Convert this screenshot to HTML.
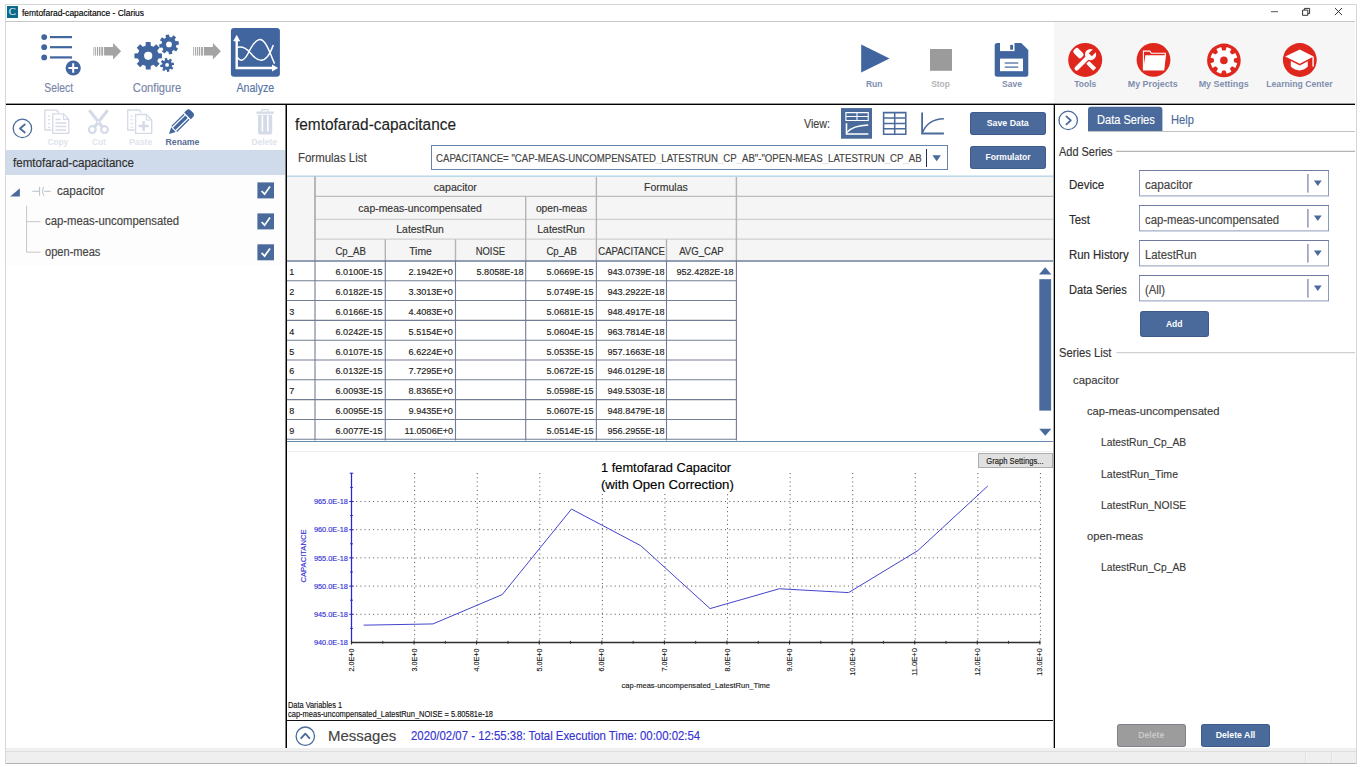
<!DOCTYPE html>
<html><head><meta charset="utf-8"><title>femtofarad-capacitance - Clarius</title>
<style>
html,body{margin:0;padding:0;background:#fff;}
body{width:1360px;height:767px;position:relative;overflow:hidden;font-family:"Liberation Sans",sans-serif;}
.t{position:absolute;white-space:nowrap;-webkit-text-stroke:0.15px;}
.r{position:absolute;display:block;}
</style></head><body>
<div class="r" style="left:5px;top:4px;width:1352px;height:760px;background:#ffffff;border:1px solid #d6d6d8;box-sizing:border-box;"></div>
<div class="r" style="left:7px;top:6px;width:11px;height:12px;background:#0b6a8c;"></div>
<div class="t" style="left:8.71px;top:4.90px;font-size:10.5px;line-height:14px;color:#d8e8ee;transform:scaleX(1.0000);transform-origin:50% 50%;font-family:'Liberation Serif',serif;">C</div>
<div class="t" style="left:22.00px;top:6.50px;font-size:9px;line-height:12px;color:#000;transform:scaleX(0.9380);transform-origin:0 50%;">femtofarad-capacitance - Clarius</div>
<div class="r" style="left:6px;top:21px;width:1349px;height:1px;background:#c6c6c6;"></div>
<svg class="r" style="left:1265px;top:3px;" width="90" height="16" viewBox="0 0 90 16"><path d="M6 8.7h7" stroke="#555" stroke-width="1" fill="none"/><path d="M37.6 7.1h5.2v5.2h-5.2z M39.4 7v-1.6h5.2v5.2h-1.7" stroke="#333" stroke-width="1" fill="none"/><path d="M69.9 5l7.1 7.1M77 5l-7.1 7.1" stroke="#333" stroke-width="1" fill="none"/></svg>
<div class="r" style="left:1054px;top:22px;width:301px;height:81px;background:#f6f6f6;"></div>
<div class="r" style="left:6px;top:103px;width:1349px;height:1px;background:#9a9a9a;"></div>
<div class="r" style="left:6px;top:104px;width:1349px;height:1px;background:#000;"></div>
<div class="r" style="left:285px;top:105px;width:1px;height:643px;background:#808080;"></div>
<div class="r" style="left:286px;top:105px;width:1px;height:643px;background:#000;"></div>
<div class="r" style="left:1053px;top:105px;width:1px;height:643px;background:#b0b0b0;"></div>
<div class="r" style="left:1054px;top:105px;width:1px;height:643px;background:#000;"></div>
<div class="r" style="left:287px;top:720px;width:766px;height:1px;background:#111;"></div>
<div class="r" style="left:6px;top:748px;width:1350px;height:3px;background:#f0f0f0;"></div>
<div class="r" style="left:6px;top:751px;width:1350px;height:1px;background:#dedede;"></div>
<div class="r" style="left:6px;top:752px;width:1350px;height:11px;background:#efefef;"></div>
<div class="r" style="left:6px;top:763px;width:1350px;height:1px;background:#b2b2b2;"></div>
<div class="r" style="left:1305px;top:752px;width:1px;height:11px;background:#e2e2e2;"></div>
<div class="r" style="left:1331px;top:752px;width:1px;height:11px;background:#e2e2e2;"></div>
<div class="r" style="left:1306px;top:752px;width:1px;height:11px;background:#f5f5f5;"></div>
<div class="r" style="left:1332px;top:752px;width:1px;height:11px;background:#f5f5f5;"></div>
<svg class="r" style="left:0px;top:0px;" width="300" height="100" viewBox="0 0 300 100"><circle cx="44.2" cy="37.1" r="2.9" fill="#40659f"/><rect x="50" y="36.0" width="22" height="2.2" fill="#40659f"/><circle cx="44.2" cy="47.2" r="2.9" fill="#40659f"/><rect x="50" y="46.1" width="22" height="2.2" fill="#40659f"/><circle cx="44.2" cy="57.4" r="2.9" fill="#40659f"/><rect x="50" y="56.3" width="22" height="2.2" fill="#40659f"/><circle cx="73.2" cy="68" r="7.6" fill="#40659f"/><path d="M68.4 68h9.6M73.2 63.2v9.6" stroke="#fff" stroke-width="2" fill="none"/><rect x="93.50" y="47" width="0.80" height="8.6" fill="#a3a3a3"/><rect x="95.20" y="47" width="0.90" height="8.6" fill="#a3a3a3"/><rect x="97.00" y="47" width="1.10" height="8.6" fill="#a3a3a3"/><rect x="99.00" y="47" width="1.40" height="8.6" fill="#a3a3a3"/><rect x="101.30" y="47" width="1.80" height="8.6" fill="#a3a3a3"/><path d="M104.10 47 H113.10 V43 L121.10 51.3 L113.10 59.4 V55.6 H104.10 Z" fill="#a3a3a3"/><path d="M158.37 53.19 L161.99 53.39 L161.99 58.21 L158.37 58.41 L157.24 61.14 L159.65 63.85 L156.25 67.25 L153.54 64.84 L150.81 65.97 L150.61 69.59 L145.79 69.59 L145.59 65.97 L142.86 64.84 L140.15 67.25 L136.75 63.85 L139.16 61.14 L138.03 58.41 L134.41 58.21 L134.41 53.39 L138.03 53.19 L139.16 50.46 L136.75 47.75 L140.15 44.35 L142.86 46.76 L145.59 45.63 L145.79 42.01 L150.61 42.01 L150.81 45.63 L153.54 46.76 L156.25 44.35 L159.65 47.75 L157.24 50.46Z M144.10 55.80 a4.10 4.10 0 1 0 8.20 0 a4.10 4.10 0 1 0 -8.20 0Z" fill="#40659f" fill-rule="evenodd"/><path d="M175.74 41.34 L178.40 41.00 L179.00 44.38 L176.38 44.97 L175.93 47.00 L178.06 48.64 L176.08 51.46 L173.82 50.02 L172.06 51.14 L172.40 53.80 L169.02 54.40 L168.43 51.78 L166.40 51.33 L164.76 53.46 L161.94 51.48 L163.38 49.22 L162.26 47.46 L159.60 47.80 L159.00 44.42 L161.62 43.83 L162.07 41.80 L159.94 40.16 L161.92 37.34 L164.18 38.78 L165.94 37.66 L165.60 35.00 L168.98 34.40 L169.57 37.02 L171.60 37.47 L173.24 35.34 L176.06 37.32 L174.62 39.58Z M166.10 44.40 a2.90 2.90 0 1 0 5.80 0 a2.90 2.90 0 1 0 -5.80 0Z" fill="#40659f" fill-rule="evenodd"/><path d="M171.65 62.83 L173.68 62.52 L174.10 64.89 L172.09 65.28 L171.78 66.66 L173.44 67.87 L172.06 69.84 L170.35 68.70 L169.17 69.45 L169.48 71.48 L167.11 71.90 L166.72 69.89 L165.34 69.58 L164.13 71.24 L162.16 69.86 L163.30 68.15 L162.55 66.97 L160.52 67.28 L160.10 64.91 L162.11 64.52 L162.42 63.14 L160.76 61.93 L162.14 59.96 L163.85 61.10 L165.03 60.35 L164.72 58.32 L167.09 57.90 L167.48 59.91 L168.86 60.22 L170.07 58.56 L172.04 59.94 L170.90 61.65Z M165.20 64.90 a1.90 1.90 0 1 0 3.80 0 a1.90 1.90 0 1 0 -3.80 0Z" fill="#40659f" fill-rule="evenodd"/><rect x="193.30" y="47" width="0.80" height="8.6" fill="#a3a3a3"/><rect x="195.00" y="47" width="0.90" height="8.6" fill="#a3a3a3"/><rect x="196.80" y="47" width="1.10" height="8.6" fill="#a3a3a3"/><rect x="198.80" y="47" width="1.40" height="8.6" fill="#a3a3a3"/><rect x="201.10" y="47" width="1.80" height="8.6" fill="#a3a3a3"/><path d="M203.90 47 H212.90 V43 L220.90 51.3 L212.90 59.4 V55.6 H203.90 Z" fill="#a3a3a3"/><rect x="230.9" y="28.1" width="49" height="48.7" rx="3.2" fill="#40659f"/><path d="M236.7 39.5V68H273" stroke="#fff" stroke-width="2.4" fill="none"/><path d="M233.2 41.2L236.7 34.8L240.2 41.2Z M272 64.6L278.2 68L272 71.4Z" fill="#fff"/><path d="M237.4 57.5C240 61.5 244 61.5 248 53.5C253 43 257 39.4 260.3 39.4C265 39.4 269 50 271 55C272.5 59 273.6 61.5 274.6 63.6" stroke="#fff" stroke-width="1.5" fill="none"/><path d="M237.4 47.3C243 46 247 49 250 52.5C254 57.5 257 60.3 261 60.3C266 60.3 270.5 53 273.3 45" stroke="#fff" stroke-width="1.5" fill="none"/></svg>
<div class="t" style="left:41.62px;top:79.50px;font-size:12px;line-height:16px;color:#7686aa;transform:scaleX(0.8605);transform-origin:50% 50%;">Select</div>
<div class="t" style="left:130.88px;top:79.50px;font-size:12px;line-height:16px;color:#7686aa;transform:scaleX(0.9302);transform-origin:50% 50%;">Configure</div>
<div class="t" style="left:233.85px;top:79.50px;font-size:12px;line-height:16px;color:#5875a6;transform:scaleX(0.8854);transform-origin:50% 50%;">Analyze</div>
<svg class="r" style="left:840px;top:30px;" width="520" height="60" viewBox="840 30 520 60"><path d="M861.2 44.6L889.6 58.6L861.2 72.6Z" fill="#40659f"/><rect x="930" y="49" width="22" height="21.8" fill="#9b9b9b"/><path d="M997.2 42.9H1021.2L1028.3 50V74.3a2.5 2.5 0 0 1 -2.5 2.5H997.2a2.5 2.5 0 0 1 -2.5 -2.5V45.4a2.5 2.5 0 0 1 2.5 -2.5Z" fill="#40659f"/><rect x="1000" y="42.5" width="14.5" height="8.6" fill="#fff"/><rect x="1010.2" y="44.9" width="2.8" height="4.8" fill="#40659f"/><rect x="1000" y="58.6" width="23" height="12.6" fill="#fff"/><rect x="1004.7" y="62.4" width="13.6" height="1.2" fill="#40659f"/><rect x="1004.7" y="66.5" width="13.6" height="1.2" fill="#40659f"/><circle cx="1085.2" cy="59.9" r="17" fill="#e0271d"/><g transform="translate(1085.2 59.9) rotate(-45)"><rect x="-14.2" y="-2.1" width="19" height="4.2" rx="2.1" fill="#fff"/><circle cx="7.6" cy="0" r="5.6" fill="#fff"/><rect x="7.2" y="-2.1" width="8" height="4.2" fill="#e0271d"/></g><g transform="translate(1085.2 59.9) rotate(45)"><rect x="-15" y="-3.3" width="10.8" height="6.6" rx="2.4" fill="#fff"/><rect x="3.4" y="-2.1" width="10" height="4.2" rx="0.8" fill="#fff"/></g><circle cx="1153.5" cy="59.9" r="16.9" fill="#e0271d"/><path d="M1143.4 69.5V51.1H1149.8L1151.3 53.2H1165.3V56" stroke="#fff" stroke-width="1.1" fill="none"/><path d="M1145.4 55.3H1166L1164.2 70.4H1143Z" fill="#fff"/><circle cx="1223.9" cy="60.4" r="16.8" fill="#e0271d"/><path d="M1233.88 61.98 L1237.32 63.18 L1235.35 67.92 L1232.07 66.34 L1229.84 68.57 L1231.42 71.85 L1226.68 73.82 L1225.48 70.38 L1222.32 70.38 L1221.12 73.82 L1216.38 71.85 L1217.96 68.57 L1215.73 66.34 L1212.45 67.92 L1210.48 63.18 L1213.92 61.98 L1213.92 58.82 L1210.48 57.62 L1212.45 52.88 L1215.73 54.46 L1217.96 52.23 L1216.38 48.95 L1221.12 46.98 L1222.32 50.42 L1225.48 50.42 L1226.68 46.98 L1231.42 48.95 L1229.84 52.23 L1232.07 54.46 L1235.35 52.88 L1237.32 57.62 L1233.88 58.82Z" fill="#fff"/><circle cx="1223.9" cy="60.4" r="3.8" fill="#e0271d"/><circle cx="1299.8" cy="60" r="16.9" fill="#e0271d"/><path d="M1299.8 49.6L1313.6 56.6L1299.8 63.8L1285.2 56.6Z" fill="#fff"/><path d="M1290.8 60.9L1299.8 65.4L1307.8 61.2V66.6C1306 69 1302.5 70.4 1299.5 70.4C1296.5 70.4 1292.6 69 1290.8 66.6Z" fill="#fff"/><rect x="1312.4" y="56.8" width="1.4" height="9.8" fill="#fff"/></svg>
<div class="t" style="left:864.97px;top:78.00px;font-size:9.5px;line-height:12px;color:#7f8eae;transform:scaleX(0.8989);transform-origin:50% 50%;font-weight:bold;-webkit-text-stroke:0;">Run</div>
<div class="t" style="left:930.25px;top:78.00px;font-size:9.5px;line-height:12px;color:#b5b5b5;transform:scaleX(0.8907);transform-origin:50% 50%;font-weight:bold;-webkit-text-stroke:0;">Stop</div>
<div class="t" style="left:1000.81px;top:78.00px;font-size:9.5px;line-height:12px;color:#7f8eae;transform:scaleX(0.9014);transform-origin:50% 50%;font-weight:bold;-webkit-text-stroke:0;">Save</div>
<div class="t" style="left:1072.89px;top:78.00px;font-size:9.5px;line-height:12px;color:#7f8eae;transform:scaleX(0.8933);transform-origin:50% 50%;font-weight:bold;-webkit-text-stroke:0;">Tools</div>
<div class="t" style="left:1126.44px;top:78.00px;font-size:9.5px;line-height:12px;color:#7f8eae;transform:scaleX(0.9338);transform-origin:50% 50%;font-weight:bold;-webkit-text-stroke:0;">My Projects</div>
<div class="t" style="left:1197.14px;top:78.00px;font-size:9.5px;line-height:12px;color:#7f8eae;transform:scaleX(0.9378);transform-origin:50% 50%;font-weight:bold;-webkit-text-stroke:0;">My Settings</div>
<div class="t" style="left:1263.08px;top:78.00px;font-size:9.5px;line-height:12px;color:#7f8eae;transform:scaleX(0.9101);transform-origin:50% 50%;font-weight:bold;-webkit-text-stroke:0;">Learning Center</div>
<svg class="r" style="left:6px;top:105px;" width="279" height="45" viewBox="6 105 279 45"><circle cx="22.4" cy="128.4" r="9.2" fill="none" stroke="#4a6a9b" stroke-width="1.3"/><path d="M24.8 124.5L20 128.5L24.8 132.5" fill="none" stroke="#4a6a9b" stroke-width="1.8" stroke-linecap="round" stroke-linejoin="round"/><path d="M51.5 130H44.8V110.2H56.5L59 112.8" fill="none" stroke="#d4dae7" stroke-width="1.3"/><rect x="47.8" y="115.5" width="2.2" height="1.1" fill="#d4dae7"/><rect x="47.8" y="119.2" width="2.2" height="1.1" fill="#d4dae7"/><rect x="47.8" y="123.0" width="2.2" height="1.1" fill="#d4dae7"/><rect x="47.8" y="126.8" width="2.2" height="1.1" fill="#d4dae7"/><path d="M52.8 113.9H63.5L68.8 119.4V133.4H52.8Z" fill="#fff" stroke="#d4dae7" stroke-width="1.3"/><path d="M63.5 113.9V119.4H68.8" fill="none" stroke="#d4dae7" stroke-width="1.1"/><path d="M55.5 119.5h5M55.5 123h10.6M55.5 126.5h10.6M55.5 130h10.6" stroke="#d4dae7" stroke-width="1.3" fill="none"/><path d="M89.3 110.2L102.6 127.4M107.6 110.2L94.3 127.4" stroke="#d4dae7" stroke-width="3.1" fill="none"/><circle cx="98.45" cy="122.2" r="0.9" fill="#fff"/><circle cx="92.3" cy="129.6" r="3.4" fill="none" stroke="#d4dae7" stroke-width="2.2"/><circle cx="104.5" cy="129.6" r="3.4" fill="none" stroke="#d4dae7" stroke-width="2.2"/><path d="M134.6 130H127.7V110H139L141.5 112.6" fill="none" stroke="#d4dae7" stroke-width="1.3"/><rect x="130.6" y="115.5" width="2.2" height="1.1" fill="#d4dae7"/><rect x="130.6" y="119.2" width="2.2" height="1.1" fill="#d4dae7"/><rect x="130.6" y="123.0" width="2.2" height="1.1" fill="#d4dae7"/><rect x="130.6" y="126.8" width="2.2" height="1.1" fill="#d4dae7"/><path d="M135.6 114.5H146.3L151.7 120V133.4H135.6Z" fill="#fff" stroke="#d4dae7" stroke-width="1.3"/><path d="M146.3 114.5V120H151.7" fill="none" stroke="#d4dae7" stroke-width="1.1"/><path d="M138.6 126h10M143.6 121v10" stroke="#d4dae7" stroke-width="2.4" fill="none"/><g transform="translate(169 134) rotate(-44.5)" fill="#40659f"><path d="M0 0L6.2 -3.2V3.2Z"/><path d="M7.3 -4.2H24.6V-2.9H7.3Z M7.3 -1.6H24.6V1.6H7.3Z M7.3 2.9H24.6V4.2H7.3Z"/><path d="M26 -4.7H29.1a2.9 2.9 0 0 1 2.9 2.9V1.8a2.9 2.9 0 0 1 -2.9 2.9H26Z"/></g><path d="M261.5 111.6V110.6a1 1 0 0 1 1 -1H267.6a1 1 0 0 1 1 1V111.6" fill="none" stroke="#d4dae7" stroke-width="1.2"/><rect x="256.4" y="111.5" width="17.4" height="2.3" fill="#d4dae7"/><path d="M258 114.7H272.2V132.4a2 2 0 0 1 -2 2H260a2 2 0 0 1 -2 -2Z" fill="#d4dae7"/><rect x="261.6" y="115.5" width="1.6" height="16" fill="#fff"/><rect x="267" y="115.5" width="1.6" height="16" fill="#fff"/></svg>
<div class="t" style="left:45.82px;top:136.00px;font-size:9.5px;line-height:12px;color:#e0e4ec;transform:scaleX(0.8673);transform-origin:50% 50%;font-weight:bold;-webkit-text-stroke:0;">Copy</div>
<div class="t" style="left:90.79px;top:136.00px;font-size:9.5px;line-height:12px;color:#e0e4ec;transform:scaleX(0.8719);transform-origin:50% 50%;font-weight:bold;-webkit-text-stroke:0;">Cut</div>
<div class="t" style="left:127.92px;top:136.00px;font-size:9.5px;line-height:12px;color:#e0e4ec;transform:scaleX(0.9309);transform-origin:50% 50%;font-weight:bold;-webkit-text-stroke:0;">Paste</div>
<div class="t" style="left:163.52px;top:136.00px;font-size:9.5px;line-height:12px;color:#586d97;transform:scaleX(0.9199);transform-origin:50% 50%;font-weight:bold;-webkit-text-stroke:0;">Rename</div>
<div class="t" style="left:250.34px;top:136.00px;font-size:9.5px;line-height:12px;color:#e0e4ec;transform:scaleX(0.8978);transform-origin:50% 50%;font-weight:bold;-webkit-text-stroke:0;">Delete</div>
<div class="r" style="left:6px;top:150px;width:279px;height:25px;background:#cfdaea;"></div>
<div class="t" style="left:12.80px;top:154.60px;font-size:12px;line-height:16px;color:#2e2e2e;transform:scaleX(0.9649);transform-origin:0 50%;">femtofarad-capacitance</div>
<div class="r" style="left:6px;top:175px;width:279px;height:91px;background:#fdfdfd;"></div>
<svg class="r" style="left:6px;top:178px;" width="279" height="90" viewBox="6 178 279 90"><path d="M10.2 196.4H19.9V188.2Z" fill="#4a6a9b"/><path d="M32.4 191.3H39.2M39.6 186.9V195.7M50.5 191.3H44.2" stroke="#b0b5c2" stroke-width="0.9" fill="none"/><path d="M43.8 186.9C42.2 189 42.2 193.6 43.8 195.7" stroke="#b0b5c2" stroke-width="0.9" fill="none"/><path d="M26.6 205.8V252.2M26.6 221.7H40.5M26.6 252.2H40.5" stroke="#c6c6c6" stroke-width="1" fill="none"/><rect x="257.4" y="182.4" width="16.6" height="16" fill="#4a6a9b"/><path d="M261.6 191.0L264.6 194.2L270.0 186.6" stroke="#fff" stroke-width="1.7" fill="none"/><rect x="257.4" y="213.4" width="16.6" height="16" fill="#4a6a9b"/><path d="M261.6 222.0L264.6 225.2L270.0 217.6" stroke="#fff" stroke-width="1.7" fill="none"/><rect x="257.4" y="244.3" width="16.6" height="16" fill="#4a6a9b"/><path d="M261.6 252.9L264.6 256.1L270.0 248.5" stroke="#fff" stroke-width="1.7" fill="none"/></svg>
<div class="t" style="left:57.00px;top:182.60px;font-size:12px;line-height:16px;color:#444444;transform:scaleX(0.9755);transform-origin:0 50%;">capacitor</div>
<div class="t" style="left:45.20px;top:213.40px;font-size:12px;line-height:16px;color:#444444;transform:scaleX(0.9431);transform-origin:0 50%;">cap-meas-uncompensated</div>
<div class="t" style="left:45.20px;top:244.40px;font-size:12px;line-height:16px;color:#444444;transform:scaleX(0.9228);transform-origin:0 50%;">open-meas</div>
<div class="t" style="left:294.50px;top:114.10px;font-size:16px;line-height:21px;color:#1f1f1f;transform:scaleX(0.9629);transform-origin:0 50%;">femtofarad-capacitance</div>
<div class="t" style="left:297.50px;top:150.20px;font-size:12px;line-height:16px;color:#444;transform:scaleX(0.9525);transform-origin:0 50%;">Formulas List</div>
<div class="t" style="left:804.40px;top:115.60px;font-size:12px;line-height:16px;color:#444;transform:scaleX(0.8926);transform-origin:0 50%;">View:</div>
<svg class="r" style="left:836px;top:106px;" width="112" height="34" viewBox="836 106 112 34"><rect x="841" y="108.1" width="31" height="30.6" fill="#4a6a9b"/><path d="M845.9 112.6H868.2V120.5H845.9ZM845.9 116.5H868.2M857 112.6V120.5" stroke="#fff" stroke-width="1.1" fill="none"/><path d="M846.5 123.2V134H868.4" stroke="#fff" stroke-width="1.6" fill="none"/><path d="M847 132.4C851 127.6 857 125.4 868.2 125" stroke="#fff" stroke-width="1.3" fill="none"/><path d="M883.6 112.6H905.8V134.2H883.6ZM883.6 118H905.8M883.6 123.4H905.8M883.6 128.8H905.8M894.7 112.6V134.2" stroke="#4a6a9b" stroke-width="1.55" fill="none"/><path d="M922.1 112.4V133.5H943.9" stroke="#4a6a9b" stroke-width="1.8" fill="none"/><path d="M922.8 132.2C926 124 932 119.2 943.9 118.8" stroke="#4a6a9b" stroke-width="1.5" fill="none"/></svg>
<div class="r" style="left:969.8px;top:111.8px;width:76px;height:23px;background:#4a6a9b;border-radius:3px;box-shadow:inset 0 0 0 1px rgba(20,40,90,0.22);"></div>
<div class="t" style="left:985.09px;top:117.00px;font-size:9.5px;line-height:12px;color:#fff;transform:scaleX(0.9247);transform-origin:50% 50%;font-weight:bold;-webkit-text-stroke:0;">Save Data</div>
<div class="r" style="left:969.8px;top:145.7px;width:76px;height:23px;background:#4a6a9b;border-radius:3px;box-shadow:inset 0 0 0 1px rgba(20,40,90,0.22);"></div>
<div class="t" style="left:982.73px;top:150.90px;font-size:9.5px;line-height:12px;color:#fff;transform:scaleX(0.8975);transform-origin:50% 50%;font-weight:bold;-webkit-text-stroke:0;">Formulator</div>
<div class="r" style="left:431px;top:145px;width:517px;height:25px;background:#fff;border:1px solid #6483ad;box-sizing:border-box;"></div>
<div class="r" style="left:926px;top:149.3px;width:1px;height:17.8px;background:#22304d;"></div>
<svg class="r" style="left:930px;top:153px;" width="14" height="10" viewBox="0 0 14 10"><path d="M2.4 2.2H10.9L6.65 8.3Z" fill="#4a6a9b"/></svg>
<div class="t" style="left:436.30px;top:151.70px;font-size:10px;line-height:13px;color:#444;transform:scaleX(0.9633);transform-origin:0 50%;">CAPACITANCE= &quot;CAP-MEAS-UNCOMPENSATED<span style="color:#e2e2e2">_</span>LATESTRUN<span style="color:#e2e2e2">_</span>CP<span style="color:#e2e2e2">_</span>AB&quot;-&quot;OPEN-MEAS<span style="color:#e2e2e2">_</span>LATESTRUN<span style="color:#e2e2e2">_</span>CP<span style="color:#e2e2e2">_</span>AB</div>
<div class="r" style="left:287px;top:176px;width:766px;height:85px;background:#f5f5f5;"></div>
<div class="r" style="left:287px;top:175px;width:766px;height:1px;background:#d9eaf3;"></div>
<div class="r" style="left:287px;top:176px;width:766px;height:1px;background:#bcd9e8;"></div>
<svg class="r" style="left:287px;top:174px;" width="766" height="268" viewBox="287 174 766 268"><path d="M315 196.4H1053" stroke="#bdbdbd" stroke-width="1.3"/><path d="M315 219.3H1053" stroke="#cfcfcf" stroke-width="1.3"/><path d="M315 239.2H1053" stroke="#cfcfcf" stroke-width="1.3"/><path d="M315 176.5V261" stroke="#9c9ca4" stroke-width="1.4"/><path d="M596.4 177V261M736.4 177V261" stroke="#b4b4b4" stroke-width="1.4"/><path d="M525.7 196.4V261" stroke="#b4b4b4" stroke-width="1.4"/><path d="M385.3 239.2V261M455.5 239.2V261M666.5 239.2V261" stroke="#b4b4b4" stroke-width="1.4"/><rect x="287" y="261.5" width="449.4" height="179" fill="#fff"/><path d="M287 280.72H736.4" stroke="#737c94" stroke-width="1.1"/><path d="M287 300.54H736.4" stroke="#737c94" stroke-width="1.1"/><path d="M287 320.36H736.4" stroke="#737c94" stroke-width="1.1"/><path d="M287 340.18H736.4" stroke="#737c94" stroke-width="1.1"/><path d="M287 360.00H736.4" stroke="#737c94" stroke-width="1.1"/><path d="M287 379.82H736.4" stroke="#737c94" stroke-width="1.1"/><path d="M287 399.64H736.4" stroke="#737c94" stroke-width="1.1"/><path d="M287 419.46H736.4" stroke="#737c94" stroke-width="1.1"/><path d="M287 439.28H736.4" stroke="#737c94" stroke-width="1.1"/><path d="M315.0 261V440.5" stroke="#737c94" stroke-width="1.1"/><path d="M385.3 261V440.5" stroke="#737c94" stroke-width="1.1"/><path d="M455.5 261V440.5" stroke="#737c94" stroke-width="1.1"/><path d="M525.7 261V440.5" stroke="#737c94" stroke-width="1.1"/><path d="M596.4 261V440.5" stroke="#737c94" stroke-width="1.1"/><path d="M666.5 261V440.5" stroke="#737c94" stroke-width="1.1"/><path d="M736.4 261V440.5" stroke="#737c94" stroke-width="1.1"/><path d="M287 260.9H1053" stroke="#6f7f9c" stroke-width="1.5"/></svg>
<div class="t" style="left:433.38px;top:179.80px;font-size:11px;line-height:14px;color:#333;transform:scaleX(0.9678);transform-origin:50% 50%;">capacitor</div>
<div class="t" style="left:643.48px;top:179.80px;font-size:11px;line-height:14px;color:#333;transform:scaleX(0.9510);transform-origin:50% 50%;">Formulas</div>
<div class="t" style="left:355.28px;top:201.30px;font-size:11px;line-height:14px;color:#333;transform:scaleX(0.9482);transform-origin:50% 50%;">cap-meas-uncompensated</div>
<div class="t" style="left:533.68px;top:201.30px;font-size:11px;line-height:14px;color:#333;transform:scaleX(0.9303);transform-origin:50% 50%;">open-meas</div>
<div class="t" style="left:395.33px;top:222.30px;font-size:11px;line-height:14px;color:#333;transform:scaleX(0.9472);transform-origin:50% 50%;">LatestRun</div>
<div class="t" style="left:536.13px;top:222.30px;font-size:11px;line-height:14px;color:#333;transform:scaleX(0.9472);transform-origin:50% 50%;">LatestRun</div>
<div class="t" style="left:333.56px;top:243.90px;font-size:10.5px;line-height:14px;color:#333;transform:scaleX(0.9137);transform-origin:50% 50%;">Cp_AB</div>
<div class="t" style="left:409.03px;top:243.90px;font-size:10.5px;line-height:14px;color:#333;transform:scaleX(0.9850);transform-origin:50% 50%;">Time</div>
<div class="t" style="left:474.26px;top:243.90px;font-size:10.5px;line-height:14px;color:#333;transform:scaleX(0.8998);transform-origin:50% 50%;">NOISE</div>
<div class="t" style="left:544.56px;top:243.90px;font-size:10.5px;line-height:14px;color:#333;transform:scaleX(0.9137);transform-origin:50% 50%;">Cp_AB</div>
<div class="t" style="left:594.94px;top:243.90px;font-size:10.5px;line-height:14px;color:#333;transform:scaleX(0.9108);transform-origin:50% 50%;">CAPACITANCE</div>
<div class="t" style="left:677.09px;top:243.90px;font-size:10.5px;line-height:14px;color:#333;transform:scaleX(0.9114);transform-origin:50% 50%;">AVG_CAP</div>
<div class="t" style="left:289.30px;top:266.30px;font-size:9px;line-height:12px;color:#1e1e1e;transform:scaleX(1.0000);transform-origin:0 50%;">1</div>
<div class="t" style="left:336.36px;top:266.30px;font-size:9px;line-height:12px;color:#1e1e1e;transform:scaleX(1.0100);transform-origin:100% 50%;">6.0100E-15</div>
<div class="t" style="left:409.31px;top:266.30px;font-size:9px;line-height:12px;color:#1e1e1e;transform:scaleX(1.0100);transform-origin:100% 50%;">2.1942E+0</div>
<div class="t" style="left:476.76px;top:266.30px;font-size:9px;line-height:12px;color:#1e1e1e;transform:scaleX(1.0100);transform-origin:100% 50%;">5.8058E-18</div>
<div class="t" style="left:547.46px;top:266.30px;font-size:9px;line-height:12px;color:#1e1e1e;transform:scaleX(1.0100);transform-origin:100% 50%;">5.0669E-15</div>
<div class="t" style="left:607.55px;top:266.30px;font-size:9px;line-height:12px;color:#1e1e1e;transform:scaleX(1.0100);transform-origin:100% 50%;">943.0739E-18</div>
<div class="t" style="left:677.45px;top:266.30px;font-size:9px;line-height:12px;color:#1e1e1e;transform:scaleX(1.0100);transform-origin:100% 50%;">952.4282E-18</div>
<div class="t" style="left:289.30px;top:286.12px;font-size:9px;line-height:12px;color:#1e1e1e;transform:scaleX(1.0000);transform-origin:0 50%;">2</div>
<div class="t" style="left:336.36px;top:286.12px;font-size:9px;line-height:12px;color:#1e1e1e;transform:scaleX(1.0100);transform-origin:100% 50%;">6.0182E-15</div>
<div class="t" style="left:409.31px;top:286.12px;font-size:9px;line-height:12px;color:#1e1e1e;transform:scaleX(1.0100);transform-origin:100% 50%;">3.3013E+0</div>
<div class="t" style="left:547.46px;top:286.12px;font-size:9px;line-height:12px;color:#1e1e1e;transform:scaleX(1.0100);transform-origin:100% 50%;">5.0749E-15</div>
<div class="t" style="left:607.55px;top:286.12px;font-size:9px;line-height:12px;color:#1e1e1e;transform:scaleX(1.0100);transform-origin:100% 50%;">943.2922E-18</div>
<div class="t" style="left:289.30px;top:305.94px;font-size:9px;line-height:12px;color:#1e1e1e;transform:scaleX(1.0000);transform-origin:0 50%;">3</div>
<div class="t" style="left:336.36px;top:305.94px;font-size:9px;line-height:12px;color:#1e1e1e;transform:scaleX(1.0100);transform-origin:100% 50%;">6.0166E-15</div>
<div class="t" style="left:409.31px;top:305.94px;font-size:9px;line-height:12px;color:#1e1e1e;transform:scaleX(1.0100);transform-origin:100% 50%;">4.4083E+0</div>
<div class="t" style="left:547.46px;top:305.94px;font-size:9px;line-height:12px;color:#1e1e1e;transform:scaleX(1.0100);transform-origin:100% 50%;">5.0681E-15</div>
<div class="t" style="left:607.55px;top:305.94px;font-size:9px;line-height:12px;color:#1e1e1e;transform:scaleX(1.0100);transform-origin:100% 50%;">948.4917E-18</div>
<div class="t" style="left:289.30px;top:325.76px;font-size:9px;line-height:12px;color:#1e1e1e;transform:scaleX(1.0000);transform-origin:0 50%;">4</div>
<div class="t" style="left:336.36px;top:325.76px;font-size:9px;line-height:12px;color:#1e1e1e;transform:scaleX(1.0100);transform-origin:100% 50%;">6.0242E-15</div>
<div class="t" style="left:409.31px;top:325.76px;font-size:9px;line-height:12px;color:#1e1e1e;transform:scaleX(1.0100);transform-origin:100% 50%;">5.5154E+0</div>
<div class="t" style="left:547.46px;top:325.76px;font-size:9px;line-height:12px;color:#1e1e1e;transform:scaleX(1.0100);transform-origin:100% 50%;">5.0604E-15</div>
<div class="t" style="left:607.55px;top:325.76px;font-size:9px;line-height:12px;color:#1e1e1e;transform:scaleX(1.0100);transform-origin:100% 50%;">963.7814E-18</div>
<div class="t" style="left:289.30px;top:345.58px;font-size:9px;line-height:12px;color:#1e1e1e;transform:scaleX(1.0000);transform-origin:0 50%;">5</div>
<div class="t" style="left:336.36px;top:345.58px;font-size:9px;line-height:12px;color:#1e1e1e;transform:scaleX(1.0100);transform-origin:100% 50%;">6.0107E-15</div>
<div class="t" style="left:409.31px;top:345.58px;font-size:9px;line-height:12px;color:#1e1e1e;transform:scaleX(1.0100);transform-origin:100% 50%;">6.6224E+0</div>
<div class="t" style="left:547.46px;top:345.58px;font-size:9px;line-height:12px;color:#1e1e1e;transform:scaleX(1.0100);transform-origin:100% 50%;">5.0535E-15</div>
<div class="t" style="left:607.55px;top:345.58px;font-size:9px;line-height:12px;color:#1e1e1e;transform:scaleX(1.0100);transform-origin:100% 50%;">957.1663E-18</div>
<div class="t" style="left:289.30px;top:365.40px;font-size:9px;line-height:12px;color:#1e1e1e;transform:scaleX(1.0000);transform-origin:0 50%;">6</div>
<div class="t" style="left:336.36px;top:365.40px;font-size:9px;line-height:12px;color:#1e1e1e;transform:scaleX(1.0100);transform-origin:100% 50%;">6.0132E-15</div>
<div class="t" style="left:409.31px;top:365.40px;font-size:9px;line-height:12px;color:#1e1e1e;transform:scaleX(1.0100);transform-origin:100% 50%;">7.7295E+0</div>
<div class="t" style="left:547.46px;top:365.40px;font-size:9px;line-height:12px;color:#1e1e1e;transform:scaleX(1.0100);transform-origin:100% 50%;">5.0672E-15</div>
<div class="t" style="left:607.55px;top:365.40px;font-size:9px;line-height:12px;color:#1e1e1e;transform:scaleX(1.0100);transform-origin:100% 50%;">946.0129E-18</div>
<div class="t" style="left:289.30px;top:385.22px;font-size:9px;line-height:12px;color:#1e1e1e;transform:scaleX(1.0000);transform-origin:0 50%;">7</div>
<div class="t" style="left:336.36px;top:385.22px;font-size:9px;line-height:12px;color:#1e1e1e;transform:scaleX(1.0100);transform-origin:100% 50%;">6.0093E-15</div>
<div class="t" style="left:409.31px;top:385.22px;font-size:9px;line-height:12px;color:#1e1e1e;transform:scaleX(1.0100);transform-origin:100% 50%;">8.8365E+0</div>
<div class="t" style="left:547.46px;top:385.22px;font-size:9px;line-height:12px;color:#1e1e1e;transform:scaleX(1.0100);transform-origin:100% 50%;">5.0598E-15</div>
<div class="t" style="left:607.55px;top:385.22px;font-size:9px;line-height:12px;color:#1e1e1e;transform:scaleX(1.0100);transform-origin:100% 50%;">949.5303E-18</div>
<div class="t" style="left:289.30px;top:405.04px;font-size:9px;line-height:12px;color:#1e1e1e;transform:scaleX(1.0000);transform-origin:0 50%;">8</div>
<div class="t" style="left:336.36px;top:405.04px;font-size:9px;line-height:12px;color:#1e1e1e;transform:scaleX(1.0100);transform-origin:100% 50%;">6.0095E-15</div>
<div class="t" style="left:409.31px;top:405.04px;font-size:9px;line-height:12px;color:#1e1e1e;transform:scaleX(1.0100);transform-origin:100% 50%;">9.9435E+0</div>
<div class="t" style="left:547.46px;top:405.04px;font-size:9px;line-height:12px;color:#1e1e1e;transform:scaleX(1.0100);transform-origin:100% 50%;">5.0607E-15</div>
<div class="t" style="left:607.55px;top:405.04px;font-size:9px;line-height:12px;color:#1e1e1e;transform:scaleX(1.0100);transform-origin:100% 50%;">948.8479E-18</div>
<div class="t" style="left:289.30px;top:424.86px;font-size:9px;line-height:12px;color:#1e1e1e;transform:scaleX(1.0000);transform-origin:0 50%;">9</div>
<div class="t" style="left:336.36px;top:424.86px;font-size:9px;line-height:12px;color:#1e1e1e;transform:scaleX(1.0100);transform-origin:100% 50%;">6.0077E-15</div>
<div class="t" style="left:404.97px;top:424.86px;font-size:9px;line-height:12px;color:#1e1e1e;transform:scaleX(1.0100);transform-origin:100% 50%;">11.0506E+0</div>
<div class="t" style="left:547.46px;top:424.86px;font-size:9px;line-height:12px;color:#1e1e1e;transform:scaleX(1.0100);transform-origin:100% 50%;">5.0514E-15</div>
<div class="t" style="left:607.55px;top:424.86px;font-size:9px;line-height:12px;color:#1e1e1e;transform:scaleX(1.0100);transform-origin:100% 50%;">956.2955E-18</div>
<svg class="r" style="left:1036px;top:265px;" width="18" height="174" viewBox="1036 265 18 174"><path d="M1039 274.4L1045.2 267.3L1051.4 274.4Z" fill="#4a6a9b"/><rect x="1039.3" y="279.2" width="11.8" height="131.4" fill="#4a6a9b"/><path d="M1039.2 428.8H1051.4L1045.3 435.7Z" fill="#4a6a9b"/></svg>
<div class="r" style="left:287px;top:441px;width:766px;height:1px;background:#6a8bb0;"></div>
<div class="r" style="left:287px;top:451px;width:766px;height:1px;background:#ededed;"></div>
<svg class="r" style="left:287px;top:452px;" width="766" height="200" viewBox="287 452 766 200"><path d="M356.10 614.30H1040.48" stroke="#505050" stroke-width="1" stroke-dasharray="1.05 3.19" stroke-opacity="0.95"/><path d="M356.10 586.10H1040.48" stroke="#505050" stroke-width="1" stroke-dasharray="1.05 3.19" stroke-opacity="0.95"/><path d="M356.10 557.90H1040.48" stroke="#505050" stroke-width="1" stroke-dasharray="1.05 3.19" stroke-opacity="0.95"/><path d="M356.10 529.70H1040.48" stroke="#505050" stroke-width="1" stroke-dasharray="1.05 3.19" stroke-opacity="0.95"/><path d="M356.10 501.50H1040.48" stroke="#505050" stroke-width="1" stroke-dasharray="1.05 3.19" stroke-opacity="0.95"/><path d="M414.63 473.00V640.50" stroke="#505050" stroke-width="1" stroke-dasharray="1.05 3.19" stroke-opacity="0.95"/><path d="M477.21 473.00V640.50" stroke="#505050" stroke-width="1" stroke-dasharray="1.05 3.19" stroke-opacity="0.95"/><path d="M539.79 473.00V640.50" stroke="#505050" stroke-width="1" stroke-dasharray="1.05 3.19" stroke-opacity="0.95"/><path d="M602.37 494.00V640.50" stroke="#505050" stroke-width="1" stroke-dasharray="1.05 3.19" stroke-opacity="0.95"/><path d="M664.95 494.00V640.50" stroke="#505050" stroke-width="1" stroke-dasharray="1.05 3.19" stroke-opacity="0.95"/><path d="M727.53 473.00V640.50" stroke="#505050" stroke-width="1" stroke-dasharray="1.05 3.19" stroke-opacity="0.95"/><path d="M790.11 473.00V640.50" stroke="#505050" stroke-width="1" stroke-dasharray="1.05 3.19" stroke-opacity="0.95"/><path d="M852.69 473.00V640.50" stroke="#505050" stroke-width="1" stroke-dasharray="1.05 3.19" stroke-opacity="0.95"/><path d="M915.27 473.00V640.50" stroke="#505050" stroke-width="1" stroke-dasharray="1.05 3.19" stroke-opacity="0.95"/><path d="M977.85 473.00V640.50" stroke="#505050" stroke-width="1" stroke-dasharray="1.05 3.19" stroke-opacity="0.95"/><path d="M1040.43 473.00V640.50" stroke="#505050" stroke-width="1" stroke-dasharray="1.05 3.19" stroke-opacity="0.95"/><polyline points="363.65,625.16 432.94,623.93 502.21,594.61 571.49,509.06 640.77,545.68 710.05,608.59 779.33,588.75 848.60,592.60 917.89,550.59 987.81,485.99" fill="none" stroke="#4444cf" stroke-width="1" stroke-linejoin="round"/><path d="M351.50 473V642.50" stroke="#2828cc" stroke-width="1.25"/><path d="M349.70 473.2H353.30" stroke="#2828cc" stroke-width="1"/><path d="M350.00 628.40H353.00" stroke="#2828cc" stroke-width="0.9"/><path d="M349.30 614.30H353.70" stroke="#2828cc" stroke-width="1.1"/><path d="M350.00 600.20H353.00" stroke="#2828cc" stroke-width="0.9"/><path d="M349.30 586.10H353.70" stroke="#2828cc" stroke-width="1.1"/><path d="M350.00 572.00H353.00" stroke="#2828cc" stroke-width="0.9"/><path d="M349.30 557.90H353.70" stroke="#2828cc" stroke-width="1.1"/><path d="M350.00 543.80H353.00" stroke="#2828cc" stroke-width="0.9"/><path d="M349.30 529.70H353.70" stroke="#2828cc" stroke-width="1.1"/><path d="M350.00 515.60H353.00" stroke="#2828cc" stroke-width="0.9"/><path d="M349.30 501.50H353.70" stroke="#2828cc" stroke-width="1.1"/><path d="M350.00 487.40H353.00" stroke="#2828cc" stroke-width="0.9"/><path d="M350.90 642.50H1040.38" stroke="#2e2e2e" stroke-width="1.3"/><path d="M351.50 640.50V644.50" stroke="#2e2e2e" stroke-width="1.1"/><path d="M382.79 640.90V643.70" stroke="#2e2e2e" stroke-width="1"/><path d="M414.08 640.50V644.50" stroke="#2e2e2e" stroke-width="1.1"/><path d="M445.37 640.90V643.70" stroke="#2e2e2e" stroke-width="1"/><path d="M476.66 640.50V644.50" stroke="#2e2e2e" stroke-width="1.1"/><path d="M507.95 640.90V643.70" stroke="#2e2e2e" stroke-width="1"/><path d="M539.24 640.50V644.50" stroke="#2e2e2e" stroke-width="1.1"/><path d="M570.53 640.90V643.70" stroke="#2e2e2e" stroke-width="1"/><path d="M601.82 640.50V644.50" stroke="#2e2e2e" stroke-width="1.1"/><path d="M633.11 640.90V643.70" stroke="#2e2e2e" stroke-width="1"/><path d="M664.40 640.50V644.50" stroke="#2e2e2e" stroke-width="1.1"/><path d="M695.69 640.90V643.70" stroke="#2e2e2e" stroke-width="1"/><path d="M726.98 640.50V644.50" stroke="#2e2e2e" stroke-width="1.1"/><path d="M758.27 640.90V643.70" stroke="#2e2e2e" stroke-width="1"/><path d="M789.56 640.50V644.50" stroke="#2e2e2e" stroke-width="1.1"/><path d="M820.85 640.90V643.70" stroke="#2e2e2e" stroke-width="1"/><path d="M852.14 640.50V644.50" stroke="#2e2e2e" stroke-width="1.1"/><path d="M883.43 640.90V643.70" stroke="#2e2e2e" stroke-width="1"/><path d="M914.72 640.50V644.50" stroke="#2e2e2e" stroke-width="1.1"/><path d="M946.01 640.90V643.70" stroke="#2e2e2e" stroke-width="1"/><path d="M977.30 640.50V644.50" stroke="#2e2e2e" stroke-width="1.1"/><path d="M1008.59 640.90V643.70" stroke="#2e2e2e" stroke-width="1"/><path d="M1039.88 640.50V644.50" stroke="#2e2e2e" stroke-width="1.1"/><rect x="598" y="459" width="139" height="34" fill="#fff"/></svg>
<div class="t" style="left:600.38px;top:459.10px;font-size:13px;line-height:17px;color:#000;transform:scaleX(0.9831);transform-origin:50% 50%;">1 femtofarad Capacitor</div>
<div class="t" style="left:601.91px;top:475.50px;font-size:13px;line-height:17px;color:#000;transform:scaleX(1.0170);transform-origin:50% 50%;">(with Open Correction)</div>
<div class="t" style="left:310.88px;top:638.10px;font-size:8px;line-height:10px;color:#3232d6;transform:scaleX(0.9209);transform-origin:100% 50%;">940.0E-18</div>
<div class="t" style="left:310.88px;top:609.90px;font-size:8px;line-height:10px;color:#3232d6;transform:scaleX(0.9209);transform-origin:100% 50%;">945.0E-18</div>
<div class="t" style="left:310.88px;top:581.70px;font-size:8px;line-height:10px;color:#3232d6;transform:scaleX(0.9209);transform-origin:100% 50%;">950.0E-18</div>
<div class="t" style="left:310.88px;top:553.50px;font-size:8px;line-height:10px;color:#3232d6;transform:scaleX(0.9209);transform-origin:100% 50%;">955.0E-18</div>
<div class="t" style="left:310.88px;top:525.30px;font-size:8px;line-height:10px;color:#3232d6;transform:scaleX(0.9209);transform-origin:100% 50%;">960.0E-18</div>
<div class="t" style="left:310.88px;top:497.10px;font-size:8px;line-height:10px;color:#3232d6;transform:scaleX(0.9209);transform-origin:100% 50%;">965.0E-18</div>
<div class="t" style="left:276.34px;top:551.40px;font-size:8px;line-height:10px;color:#3232d6;transform:rotate(-90deg) scaleX(0.9513);transform-origin:50% 50%;">CAPACITANCE</div>
<div class="t" style="left:339.11px;top:654.70px;font-size:8px;line-height:10px;color:#1c1c1c;transform:rotate(-90deg) scaleX(0.9070);transform-origin:50% 50%;">2.0E+0</div>
<div class="t" style="left:401.69px;top:654.70px;font-size:8px;line-height:10px;color:#1c1c1c;transform:rotate(-90deg) scaleX(0.9070);transform-origin:50% 50%;">3.0E+0</div>
<div class="t" style="left:464.27px;top:654.70px;font-size:8px;line-height:10px;color:#1c1c1c;transform:rotate(-90deg) scaleX(0.9070);transform-origin:50% 50%;">4.0E+0</div>
<div class="t" style="left:526.85px;top:654.70px;font-size:8px;line-height:10px;color:#1c1c1c;transform:rotate(-90deg) scaleX(0.9070);transform-origin:50% 50%;">5.0E+0</div>
<div class="t" style="left:589.43px;top:654.70px;font-size:8px;line-height:10px;color:#1c1c1c;transform:rotate(-90deg) scaleX(0.9070);transform-origin:50% 50%;">6.0E+0</div>
<div class="t" style="left:652.01px;top:654.70px;font-size:8px;line-height:10px;color:#1c1c1c;transform:rotate(-90deg) scaleX(0.9070);transform-origin:50% 50%;">7.0E+0</div>
<div class="t" style="left:714.59px;top:654.70px;font-size:8px;line-height:10px;color:#1c1c1c;transform:rotate(-90deg) scaleX(0.9070);transform-origin:50% 50%;">8.0E+0</div>
<div class="t" style="left:777.17px;top:654.70px;font-size:8px;line-height:10px;color:#1c1c1c;transform:rotate(-90deg) scaleX(0.9070);transform-origin:50% 50%;">9.0E+0</div>
<div class="t" style="left:837.53px;top:656.90px;font-size:8px;line-height:10px;color:#1c1c1c;transform:rotate(-90deg) scaleX(0.9191);transform-origin:50% 50%;">10.0E+0</div>
<div class="t" style="left:900.40px;top:656.90px;font-size:8px;line-height:10px;color:#1c1c1c;transform:rotate(-90deg) scaleX(0.9377);transform-origin:50% 50%;">11.0E+0</div>
<div class="t" style="left:962.69px;top:656.90px;font-size:8px;line-height:10px;color:#1c1c1c;transform:rotate(-90deg) scaleX(0.9191);transform-origin:50% 50%;">12.0E+0</div>
<div class="t" style="left:1025.27px;top:656.90px;font-size:8px;line-height:10px;color:#1c1c1c;transform:rotate(-90deg) scaleX(0.9191);transform-origin:50% 50%;">13.0E+0</div>
<div class="t" style="left:616.61px;top:680.70px;font-size:8px;line-height:10px;color:#1c1c1c;transform:scaleX(0.9424);transform-origin:50% 50%;">cap-meas-uncompensated_LatestRun_Time</div>
<div class="t" style="left:287.60px;top:699.50px;font-size:8.5px;line-height:11px;color:#111;transform:scaleX(0.8680);transform-origin:0 50%;">Data Variables 1</div>
<div class="t" style="left:287.60px;top:708.70px;font-size:8.5px;line-height:11px;color:#111;transform:scaleX(0.8809);transform-origin:0 50%;">cap-meas-uncompensated_LatestRun_NOISE = 5.80581e-18</div>
<div class="r" style="left:978px;top:453px;width:75px;height:15px;background:#e1e1e1;border:1px solid #adadad;box-sizing:border-box;"></div>
<div class="t" style="left:982.71px;top:455.90px;font-size:8.5px;line-height:11px;color:#1a1a1a;transform:scaleX(0.8999);transform-origin:50% 50%;">Graph Settings...</div>
<svg class="r" style="left:294px;top:725px;" width="24" height="23" viewBox="294 725 24 23"><circle cx="305.3" cy="736.2" r="9.2" fill="none" stroke="#4a6a9b" stroke-width="1.3"/><path d="M301.2 738.2L305.3 733.6L309.4 738.2" fill="none" stroke="#4a6a9b" stroke-width="1.8" stroke-linecap="round" stroke-linejoin="round"/></svg>
<div class="t" style="left:328.40px;top:725.80px;font-size:15.5px;line-height:20px;color:#444;transform:scaleX(0.9654);transform-origin:0 50%;">Messages</div>
<div class="t" style="left:411.20px;top:728.00px;font-size:12.5px;line-height:16px;color:#3434d0;transform:scaleX(0.9113);transform-origin:0 50%;">2020/02/07 - 12:55:38: Total Execution Time: 00:00:02:54</div>
<svg class="r" style="left:1055px;top:105px;" width="300" height="250" viewBox="1055 105 300 250"><circle cx="1068.2" cy="120.4" r="9.2" fill="none" stroke="#4a6a9b" stroke-width="1.3"/><path d="M1066.4 116.4L1070.8 120.4L1066.4 124.4" fill="none" stroke="#4a6a9b" stroke-width="1.8" stroke-linecap="round" stroke-linejoin="round"/><path d="M1088 131.5V109.8a3 3 0 0 1 3 -3H1159.4a3 3 0 0 1 3 3V131.5Z" fill="#4a6a9b"/><path d="M1088 131.5H1355" stroke="#c2c2c2" stroke-width="1.2"/><path d="M1116 151.4H1355" stroke="#b4b4b4" stroke-width="1.3"/><path d="M1116.5 352.6H1355" stroke="#d0d0d0" stroke-width="1.2"/></svg>
<div class="t" style="left:1096.70px;top:112.20px;font-size:12px;line-height:16px;color:#fff;transform:scaleX(0.9219);transform-origin:0 50%;">Data Series</div>
<div class="t" style="left:1171.30px;top:112.20px;font-size:12px;line-height:16px;color:#4a6a9b;transform:scaleX(0.9238);transform-origin:0 50%;">Help</div>
<div class="t" style="left:1058.70px;top:143.60px;font-size:12px;line-height:16px;color:#333;transform:scaleX(0.9131);transform-origin:0 50%;">Add Series</div>
<div class="t" style="left:1058.70px;top:344.60px;font-size:12px;line-height:16px;color:#333;transform:scaleX(0.9353);transform-origin:0 50%;">Series List</div>
<div class="t" style="left:1069.40px;top:176.70px;font-size:12px;line-height:16px;color:#2a2a2a;transform:scaleX(0.9596);transform-origin:0 50%;">Device</div>
<svg class="r" style="left:1138px;top:169px;" width="193" height="29" viewBox="0 0 193 29"><rect x="1.5" y="1.5" width="189" height="25.4" fill="#fff" stroke="#8d99ba" stroke-width="1"/><path d="M1 1.5H191" stroke="#6f7aa3" stroke-width="1"/><rect x="169.2" y="5" width="1.4" height="18.6" fill="#8a90b4"/><path d="M175.9 11.6H183.7L179.8 17Z" fill="#4a6a9b"/></svg>
<div class="t" style="left:1144.60px;top:176.50px;font-size:12px;line-height:16px;color:#444;transform:scaleX(0.9734);transform-origin:0 50%;">capacitor</div>
<div class="t" style="left:1069.40px;top:211.90px;font-size:12px;line-height:16px;color:#2a2a2a;transform:scaleX(0.9542);transform-origin:0 50%;">Test</div>
<svg class="r" style="left:1138px;top:204px;" width="193" height="29" viewBox="0 0 193 29"><rect x="1.5" y="1.5" width="189" height="25.4" fill="#fff" stroke="#8d99ba" stroke-width="1"/><path d="M1 1.5H191" stroke="#6f7aa3" stroke-width="1"/><rect x="169.2" y="5" width="1.4" height="18.6" fill="#8a90b4"/><path d="M175.9 11.6H183.7L179.8 17Z" fill="#4a6a9b"/></svg>
<div class="t" style="left:1144.60px;top:211.70px;font-size:12px;line-height:16px;color:#444;transform:scaleX(0.9431);transform-origin:0 50%;">cap-meas-uncompensated</div>
<div class="t" style="left:1069.40px;top:246.90px;font-size:12px;line-height:16px;color:#2a2a2a;transform:scaleX(0.9508);transform-origin:0 50%;">Run History</div>
<svg class="r" style="left:1138px;top:239px;" width="193" height="29" viewBox="0 0 193 29"><rect x="1.5" y="1.5" width="189" height="25.4" fill="#fff" stroke="#8d99ba" stroke-width="1"/><path d="M1 1.5H191" stroke="#6f7aa3" stroke-width="1"/><rect x="169.2" y="5" width="1.4" height="18.6" fill="#8a90b4"/><path d="M175.9 11.6H183.7L179.8 17Z" fill="#4a6a9b"/></svg>
<div class="t" style="left:1144.60px;top:246.70px;font-size:12px;line-height:16px;color:#444;transform:scaleX(0.9433);transform-origin:0 50%;">LatestRun</div>
<div class="t" style="left:1069.40px;top:282.10px;font-size:12px;line-height:16px;color:#2a2a2a;transform:scaleX(0.9219);transform-origin:0 50%;">Data Series</div>
<svg class="r" style="left:1138px;top:274px;" width="193" height="29" viewBox="0 0 193 29"><rect x="1.5" y="1.5" width="189" height="25.4" fill="#fff" stroke="#8d99ba" stroke-width="1"/><path d="M1 1.5H191" stroke="#6f7aa3" stroke-width="1"/><rect x="169.2" y="5" width="1.4" height="18.6" fill="#8a90b4"/><path d="M175.9 11.6H183.7L179.8 17Z" fill="#4a6a9b"/></svg>
<div class="t" style="left:1144.60px;top:281.90px;font-size:12px;line-height:16px;color:#444;transform:scaleX(0.9376);transform-origin:0 50%;">(All)</div>
<div class="r" style="left:1140px;top:311.2px;width:69px;height:25.6px;background:#4a6a9b;border-radius:3px;box-shadow:inset 0 0 0 1px rgba(20,40,90,0.22);"></div>
<div class="t" style="left:1165.27px;top:317.70px;font-size:9.5px;line-height:12px;color:#fff;transform:scaleX(0.8989);transform-origin:50% 50%;font-weight:bold;-webkit-text-stroke:0;">Add</div>
<div class="t" style="left:1073.40px;top:372.90px;font-size:11.5px;line-height:15px;color:#3a3a3a;transform:scaleX(0.9858);transform-origin:0 50%;">capacitor</div>
<div class="t" style="left:1087.30px;top:404.10px;font-size:11.5px;line-height:15px;color:#3a3a3a;transform:scaleX(0.9724);transform-origin:0 50%;">cap-meas-uncompensated</div>
<div class="t" style="left:1101.20px;top:435.30px;font-size:11.5px;line-height:15px;color:#3a3a3a;transform:scaleX(0.8944);transform-origin:0 50%;">LatestRun_Cp_AB</div>
<div class="t" style="left:1101.20px;top:466.50px;font-size:11.5px;line-height:15px;color:#3a3a3a;transform:scaleX(0.9172);transform-origin:0 50%;">LatestRun_Time</div>
<div class="t" style="left:1101.20px;top:497.70px;font-size:11.5px;line-height:15px;color:#3a3a3a;transform:scaleX(0.9006);transform-origin:0 50%;">LatestRun_NOISE</div>
<div class="t" style="left:1087.30px;top:528.50px;font-size:11.5px;line-height:15px;color:#3a3a3a;transform:scaleX(0.9733);transform-origin:0 50%;">open-meas</div>
<div class="t" style="left:1101.20px;top:559.50px;font-size:11.5px;line-height:15px;color:#3a3a3a;transform:scaleX(0.8944);transform-origin:0 50%;">LatestRun_Cp_AB</div>
<div class="r" style="left:1117.2px;top:724px;width:68.4px;height:22.8px;background:#9c9c9c;border-radius:3px;box-shadow:inset 0 0 0 1px rgba(20,40,90,0.22);"></div>
<div class="t" style="left:1137.14px;top:729.10px;font-size:9.5px;line-height:12px;color:#c9c9c9;transform:scaleX(0.9118);transform-origin:50% 50%;font-weight:bold;-webkit-text-stroke:0;">Delete</div>
<div class="r" style="left:1201.4px;top:724px;width:68.4px;height:22.8px;background:#4a6a9b;border-radius:3px;box-shadow:inset 0 0 0 1px rgba(20,40,90,0.22);"></div>
<div class="t" style="left:1214.13px;top:729.10px;font-size:9.5px;line-height:12px;color:#fff;transform:scaleX(0.9222);transform-origin:50% 50%;font-weight:bold;-webkit-text-stroke:0;">Delete All</div>
</body></html>
